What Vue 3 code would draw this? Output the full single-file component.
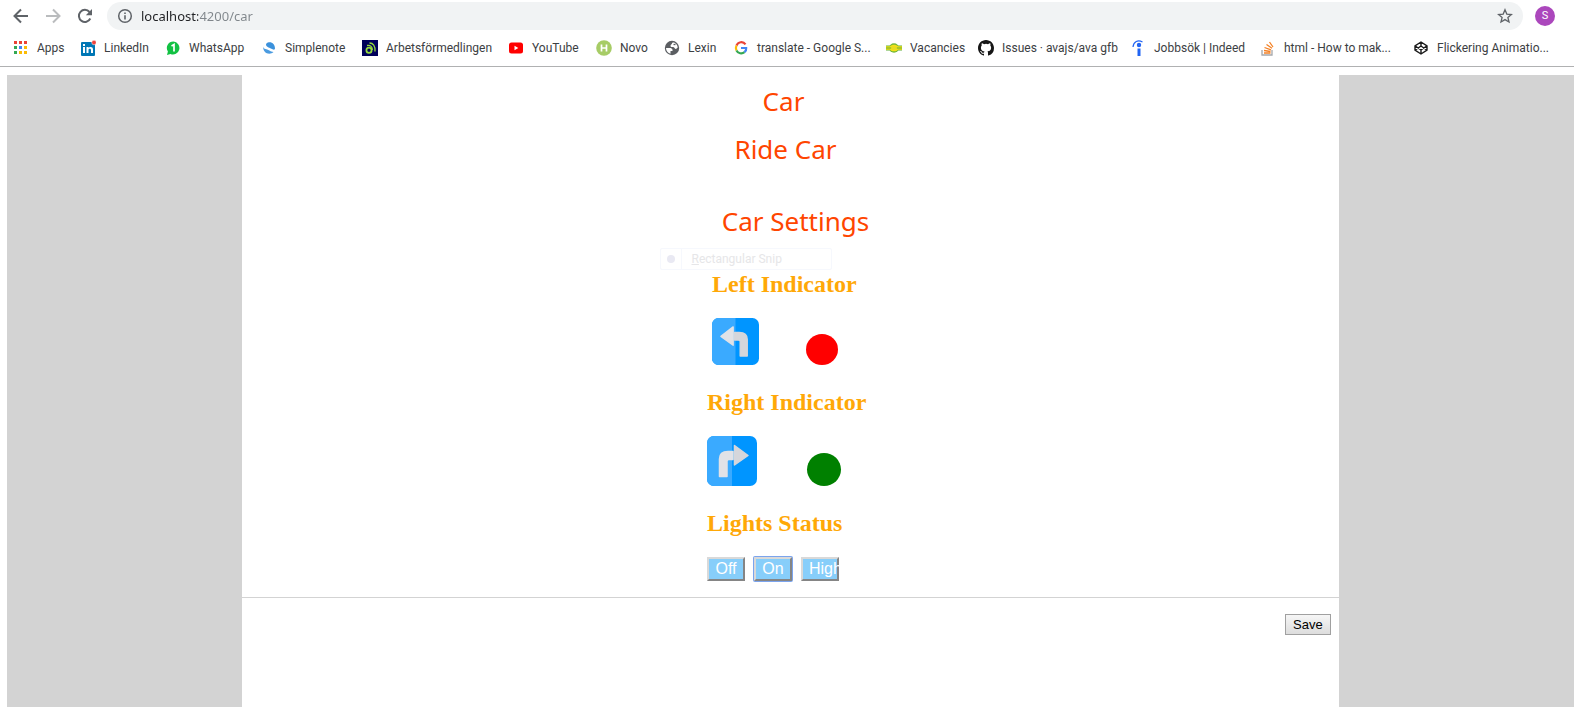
<script setup>
import { ref } from 'vue'

const url = ref('localhost:4200/car')
const bookmarks = [
  { id: 'apps', label: 'Apps' },
  { id: 'linkedin', label: 'LinkedIn' },
  { id: 'whatsapp', label: 'WhatsApp' },
  { id: 'simplenote', label: 'Simplenote' },
  { id: 'arbets', label: 'Arbetsförmedlingen' },
  { id: 'youtube', label: 'YouTube' },
  { id: 'novo', label: 'Novo' },
  { id: 'lexin', label: 'Lexin' },
  { id: 'google', label: 'translate - Google S...' },
  { id: 'vacancies', label: 'Vacancies' },
  { id: 'github', label: 'Issues · avajs/ava gfb' },
  { id: 'indeed', label: 'Jobbsök | Indeed' },
  { id: 'stack', label: 'html - How to mak...' },
  { id: 'codepen', label: 'Flickering Animatio...' }
]
const appDots = ['#ea4335', '#ea4335', '#ea4335', '#34a853', '#4285f4', '#fbbc05', '#34a853', '#fbbc05', '#fbbc05']
const lights = ['Off', 'On', 'High']
const selected = ref('On')
</script>

<template>
  <div class="browser">
    <header class="chrome">
      <div class="toolbar">
        <button class="tool" aria-label="Back">
          <svg width="16" height="16" viewBox="0 0 16 16"><path d="M15 8H2M8 1.5L1.5 8L8 14.5" fill="none" stroke="#5f6368" stroke-width="2" /></svg>
        </button>
        <button class="tool" aria-label="Forward">
          <svg width="16" height="16" viewBox="0 0 16 16"><path d="M1 8H14M8 1.5L14.500 8L8 14.500" fill="none" stroke="#babcbe" stroke-width="2" /></svg>
        </button>
        <button class="tool" aria-label="Reload">
          <svg width="16" height="16" viewBox="0 0 16 16"><path d="M13.300 10.500A6 6 0 1 1 12.500 4" fill="none" stroke="#5f6368" stroke-width="2" /><path d="M15 1V7.200H8.800Z" fill="#5f6368" /></svg>
        </button>
        <div class="address">
          <svg width="16" height="16" viewBox="0 0 16 16"><circle cx="8" cy="8" r="6.300" fill="none" stroke="#5f6368" stroke-width="1.500" /><path d="M8 7.200V11.500M8 4.500V6" stroke="#5f6368" stroke-width="1.600" /></svg>
          <input v-model="url" class="url" aria-label="Address" spellcheck="false" />
          <button class="star" aria-label="Bookmark this page">
            <svg width="16" height="16" viewBox="0 0 16 16"><path d="M8 1.800L9.800 6.100L14.400 6.500L10.900 9.500L12 14L8 11.600L4 14L5.100 9.500L1.600 6.500L6.200 6.100Z" fill="none" stroke="#5f6368" stroke-width="1.300" /></svg>
          </button>
        </div>
        <button class="avatar" aria-label="Profile">S</button>
      </div>

      <nav class="bookmarks" aria-label="Bookmarks">
        <a v-for="b in bookmarks" :key="b.id" href="#" class="bookmark">
          <svg class="fav" width="16" height="16" viewBox="0 0 16 16" aria-hidden="true">
            <template v-if="b.id === 'apps'">
              <rect v-for="(c, i) in appDots" :key="i" :x="1 + (i % 3) * 5" :y="1 + Math.floor(i / 3) * 5" width="3" height="3" :fill="c" />
            </template>
            <template v-else-if="b.id === 'linkedin'">
              <rect x="1" y="2" width="14" height="14" rx="1" fill="#0077b5" />
              <path d="M3 7H5V13H3ZM3 4H5V6H3ZM6.500 7H8.500V8C9.500 6.500 13 6.400 13 9.500V13H11V10C11 8.200 8.500 8.200 8.500 10V13H6.500Z" fill="#fff" />
              <circle cx="14" cy="2.500" r="2.300" fill="#f0443c" stroke="#fff" stroke-width="0.500" />
            </template>
            <template v-else-if="b.id === 'whatsapp'">
              <path d="M8.500 1.500A6.500 6.500 0 1 1 5.500 14L2 15L2.900 11.500A6.500 6.500 0 0 1 8.500 1.500Z" fill="#12c143" />
              <path d="M6.500 6L9 4.500V11.500" fill="none" stroke="#fff" stroke-width="1.700" />
            </template>
            <template v-else-if="b.id === 'simplenote'">
              <path d="M7 2.500C11 1.500 14 4.500 14 8.500C13.500 10.500 12 9.500 10 8.500C8 7.500 5 7 5 4.500C5.300 3.300 6 2.800 7 2.500Z" fill="#3b91dc" />
              <path d="M2.300 6.500C2.500 9.500 6 9 8 10.300C9.500 11.500 11 12 12.500 12C9 15.500 1.500 13.500 2.300 6.500Z" fill="#4a9be0" />
            </template>
            <template v-else-if="b.id === 'arbets'">
              <rect width="16" height="16" fill="#00005a" />
              <circle cx="7" cy="10.200" r="2.600" fill="none" stroke="#95d93d" stroke-width="1.800" />
              <path d="M5 5.500C8.500 4.800 10.500 7 10.300 10M7.500 3C11 3 13.500 6 13 11.500" fill="none" stroke="#95d93d" stroke-width="1.300" />
            </template>
            <template v-else-if="b.id === 'youtube'">
              <rect x="1" y="2.500" width="14" height="11" rx="2.500" fill="#f00" /><path d="M6.500 5.800V10.200L10.300 8Z" fill="#fff" />
            </template>
            <template v-else-if="b.id === 'novo'">
              <circle cx="8" cy="8" r="7.800" fill="#a7cc66" /><path d="M5.500 4.500V11.500M10.500 4.500V11.500M5.500 8H10.500" stroke="#fff" stroke-width="1.700" />
            </template>
            <template v-else-if="b.id === 'lexin'">
              <circle cx="8" cy="8" r="7.200" fill="#5b5e62" />
              <path d="M2 8H5.500C7 8 8.500 8.500 8.500 10V11H6.500V13.700C4 13 2 11 2 8ZM6.500 6C6.500 4.500 8 4.500 8 3.500C8 2.500 9.500 2.500 10.500 2.700C12.500 3.800 13.500 5.500 13.700 7.500L12 9C10.500 9 10.500 7 9 7C7.500 7 6.500 7 6.500 6Z" fill="#fff" />
              <path d="M9.500 4.500H11.500" stroke="#5b5e62" stroke-width="1.300" />
            </template>
            <template v-else-if="b.id === 'google'">
              <path d="M12.500 4.300A5.200 5.200 0 0 0 3.500 5.500" fill="none" stroke="#ea4335" stroke-width="2.200" />
              <path d="M3.500 5.500A5.500 5.500 0 0 0 3.500 10.500" fill="none" stroke="#fbbc05" stroke-width="2.200" />
              <path d="M3.500 10.500A5.200 5.200 0 0 0 11.500 12.200" fill="none" stroke="#34a853" stroke-width="2.200" />
              <path d="M11.500 12.200A5 5 0 0 0 13.200 8H8" fill="none" stroke="#4285f4" stroke-width="2.200" />
            </template>
            <template v-else-if="b.id === 'vacancies'">
              <ellipse cx="8" cy="8" rx="5" ry="4.700" fill="#72b83a" />
              <path d="M0 5.500H16V10.500H0Z" fill="#5fae36" />
              <path d="M0 6.200H4C6 4.200 10 4.200 12 6.200H16V7.500H0ZM0 8.500H16V9.800H12C10 11.800 6 11.800 4 9.800H0Z" fill="#f5e018" />
              <ellipse cx="8" cy="8" rx="3" ry="2" fill="#e9dc20" />
            </template>
            <path v-else-if="b.id === 'github'" fill="#161616" d="M8 0C3.580 0 0 3.580 0 8c0 3.540 2.290 6.530 5.470 7.590.4.070.55-.17.55-.38 0-.19-.01-.82-.01-1.490-2.010.37-2.530-.49-2.690-.94-.09-.23-.48-.94-.82-1.130-.28-.15-.68-.52-.01-.53.63-.01 1.080.58 1.230.82.72 1.210 1.870.87 2.330.66.07-.52.28-.87.51-1.070-1.780-.2-3.640-.89-3.640-3.950 0-.87.31-1.590.82-2.150-.08-.2-.36-1.020.08-2.120 0 0 .67-.21 2.200.82a7.600 7.600 0 0 1 4 0c1.530-1.040 2.200-.82 2.200-.82.44 1.100.16 1.920.08 2.120.51.56.82 1.270.82 2.150 0 3.070-1.870 3.750-3.650 3.950.29.25.54.73.54 1.480 0 1.070-.01 1.930-.01 2.200 0 .21.15.46.55.38A8 8 0 0 0 16 8c0-4.420-3.580-8-8-8Z" />
            <template v-else-if="b.id === 'indeed'">
              <circle cx="9" cy="5" r="2.200" fill="#2164f3" /><path d="M7.500 8.500H10.500V16H7.500Z" fill="#2164f3" />
              <path d="M3 7C3.500 1.500 8 -0.500 12.500 2" fill="none" stroke="#2164f3" stroke-width="1.200" />
            </template>
            <template v-else-if="b.id === 'stack'">
              <path d="M2 10V15H12V10" fill="none" stroke="#a5a7aa" stroke-width="1.300" />
              <path d="M4 13H10.500M4 10.500L10.500 11.500M4.500 7.500L11 9.800M6.500 4.500L12 8.300M9.500 2L13 7" stroke="#f48024" stroke-width="1.300" />
            </template>
            <path v-else d="M8 2L14 5.800V10.200L8 14L2 10.200V5.800ZM8 2V6M8 10V14M2 5.800L8 10L14 5.800M2 10.200L8 6L14 10.200" fill="none" stroke="#1b1b1b" stroke-width="1.400" stroke-linejoin="round" />
          </svg>
          <span>{{ b.label }}</span>
        </a>
      </nav>
    </header>

    <div class="page">
      <main class="panel">
        <h1 class="title car">Car</h1>
        <h2 class="title ride">Ride Car</h2>
        <h2 class="title settings">Car Settings</h2>

        <div class="controls">
          <section class="left">
            <h3>Left Indicator</h3>
            <div class="row">
              <svg class="sign" viewBox="0 0 50 50" role="img" aria-label="Turn left">
                <rect width="50" height="50" rx="7" fill="#0095ff" />
                <path d="M7 0H25V50H7A7 7 0 0 1 0 43V7A7 7 0 0 1 7 0Z" fill="#3aaaff" />
                <path d="M24 15.500H29C35 15.500 37.500 18.500 37.500 23V40.500H30V25Q30 23.500 28 23.500H24Z" fill="#d5d6db" stroke="#d5d6db" stroke-width="1.500" stroke-linejoin="round" />
                <path d="M22.500 9.500V29L9.500 19.500Z" fill="#e1e2e7" stroke="#e1e2e7" stroke-width="1.500" stroke-linejoin="round" />
              </svg>
              <span class="lamp red"></span>
            </div>
          </section>
          <section class="right">
            <h3>Right Indicator</h3>
            <div class="row">
              <svg class="sign" viewBox="0 0 50 50" role="img" aria-label="Turn right">
                <rect width="50" height="50" rx="7" fill="#0095ff" />
                <path d="M7 0H25V50H7A7 7 0 0 1 0 43V7A7 7 0 0 1 7 0Z" fill="#3aaaff" />
                <path d="M26 15.500H21C15 15.500 12.500 18.500 12.500 23V40.500H20V25Q20 23.500 22 23.500H26Z" fill="#e1e2e7" stroke="#e1e2e7" stroke-width="1.500" stroke-linejoin="round" />
                <path d="M27.500 9.500V29L41 19.500Z" fill="#d5d6db" stroke="#d5d6db" stroke-width="1.500" stroke-linejoin="round" />
              </svg>
              <span class="lamp green"></span>
            </div>
          </section>
          <section>
            <h3>Lights Status</h3>
            <div class="buttons">
              <button v-for="l in lights" :key="l" class="light" :class="{ active: selected === l }" @click="selected = l">{{ l }}</button>
            </div>
          </section>
        </div>

        <footer class="foot"><button class="save">Save</button></footer>

        <div class="snip" aria-hidden="true">
          <i class="dot"></i><span><u>R</u>ectangular Snip</span>
        </div>
      </main>
    </div>
  </div>
</template>

<style>
body { background: #fff; overflow: hidden; }
</style>

<style scoped>
.browser { display: flex; flex-direction: column; min-height: 100vh; }
button { font: inherit; margin: 0; border: 0; padding: 0; background: none; }
svg { display: block; flex: none; }
.chrome { border-bottom: 1px solid #b0b1b2; font-family: "Segoe UI", "Noto Sans", sans-serif; }
.toolbar { display: flex; align-items: center; height: 32px; padding: 0 19px 0 13px; }
.tool { width: 16px; height: 16px; margin-right: 16px; }
.tool:nth-child(3) { margin-right: 14px; }
.address { flex: 1; display: flex; align-items: center; height: 28px; padding: 0 10px; border-radius: 14px; background: #f1f3f4; }
.url {
  flex: 1; min-width: 0; height: 24px; margin-left: 8px; padding: 0; border: 0; outline: 0;
  font-family: inherit; font-size: 13px; color: transparent; caret-color: #202124;
  background: linear-gradient(90deg, #202124 57px, #80868b 57px);
  -webkit-background-clip: text; background-clip: text;
}
.avatar { width: 20px; height: 20px; margin-left: 12px; border-radius: 50%; background: #ab47bc; color: #fff; font-family: Roboto, sans-serif; font-size: 11px; line-height: 20px; }
.bookmarks {
  display: grid; align-items: center; height: 32px; padding: 0 0 2px 13px;
  grid-template-columns: 67px 85px 96px 101px 146px 88px 68px 69px 153px 92px 152px 130px 153px 1fr;
}
.bookmark { display: flex; align-items: center; gap: 8px; color: #3c4043; font-family: "Segoe UI", Roboto, sans-serif; font-size: 12px; line-height: 16px; text-decoration: none; white-space: nowrap; }

.page { flex: 1; display: flex; justify-content: center; margin: 8px 0 0 7px; background: #d3d3d3; }
.panel { position: relative; width: 70%; padding-top: 10px; background: #fff; }
.title { margin: 0; color: #ff4500; font-family: "Comic Sans MS", "Noto Sans", cursive; font-size: 26px; font-weight: 400; line-height: 32px; text-align: center; }
.car { padding-right: 14px; }
.ride { margin-top: 16px; padding-right: 10px; }
.settings { margin-top: 40px; padding-left: 10px; }
.controls { display: flex; flex-direction: column; gap: 23px; width: 167px; margin: 33px auto 16px; }
.left { padding-left: 5px; }
h3 { margin: 0 0 20px; color: #ffa807; font-family: "Liberation Serif", "Times New Roman", serif; font-size: 24px; line-height: 28px; white-space: nowrap; }
.row { display: flex; align-items: flex-end; gap: 47px; }
.right .row { gap: 50px; }
.sign { width: 47px; height: 47px; }
.right .sign { width: 50px; height: 50px; }
.lamp { border-radius: 50%; }
.red { width: 32px; height: 31px; background: red; }
.green { width: 34px; height: 33px; background: green; }
.buttons { display: flex; gap: 9px; }
.light { width: 38px; height: 24px; padding: 0 6px; border: 2px solid; border-color: #d9d9d9 #858585 #858585 #d9d9d9; background: #87cefa; color: #fff; font-family: "Liberation Sans", Arial, sans-serif; font-size: 16px; line-height: 20px; white-space: nowrap; clip-path: inset(0); }
.light.active { clip-path: none; box-shadow: 0 0 0 1px #7ba4ee; border-radius: 1px; }
.foot { display: flex; justify-content: flex-end; padding: 16px 8px; border-top: 1px solid #d3d3d3; }
.save { width: 46px; height: 21px; border: 1px solid #a0a0a0; background: linear-gradient(#f6f6f6, #dddddd); color: #000; font-family: "Liberation Sans", Arial, sans-serif; font-size: 13px; }
.snip { position: absolute; top: 173px; left: calc(50% - 130px); display: flex; align-items: center; width: 172px; height: 22px; box-sizing: border-box; border: 1px solid #f6f8fd; border-radius: 2px; color: #e6e6e8; font-family: "Segoe UI", Roboto, sans-serif; font-size: 12px; }
.dot { width: 8px; height: 8px; margin: 0 6px; border-radius: 50%; background: #e9e9f3; }
.snip span { padding-left: 9px; border-left: 1px solid #f6f8fd; line-height: 20px; }
</style>
